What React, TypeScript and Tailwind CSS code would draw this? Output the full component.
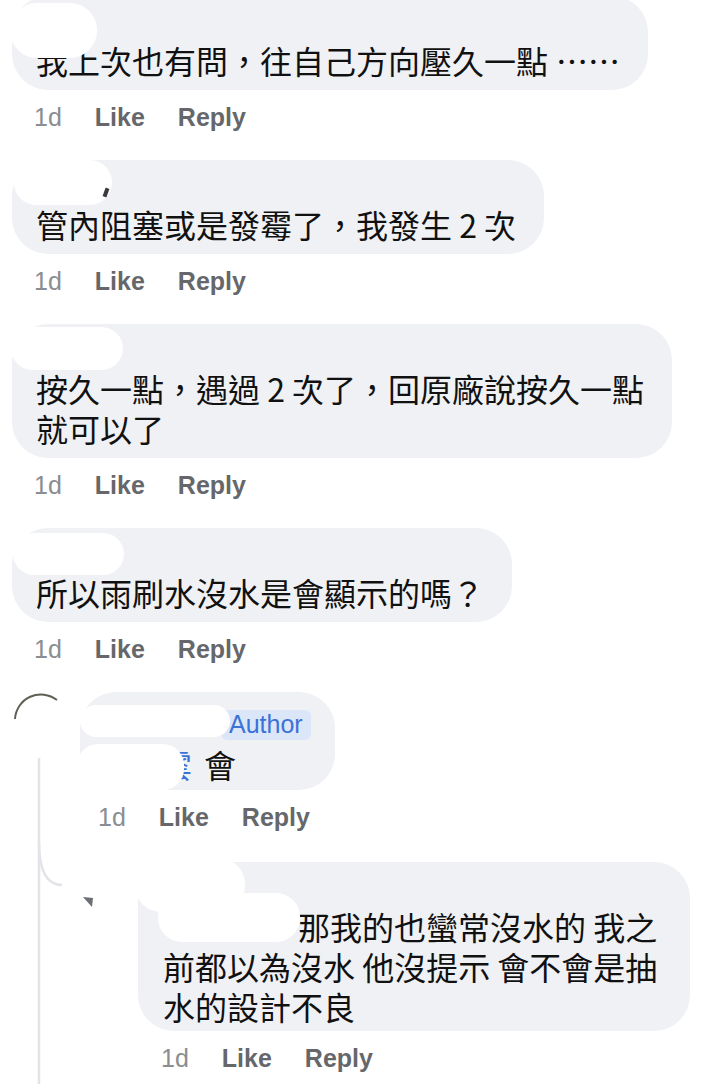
import React from 'react';

type Comment = {
  lines: React.ReactNode[];
  blob: string;
  wrap: string;
};

const comments: Comment[] = [
  {
    lines: [
      <>
        我上次也有問，往自己方向壓久一點<span className="ml-[8px]">……</span>
      </>,
    ],
    blob: 'left-[-2px] top-[7px] w-[87px] h-[55px] rounded-[27px]',
    wrap: '-mt-[4px]',
  },
  {
    lines: ['管內阻塞或是發霉了，我發生 2 次'],
    blob: 'left-[2px] top-0 w-[98px] h-[45px] rounded-[22px]',
    wrap: '',
  },
  {
    lines: ['按久一點，遇過 2 次了，回原廠說按久一點', '就可以了'],
    blob: 'left-[-1px] top-[3px] w-[112px] h-[43px] rounded-[22px]',
    wrap: '',
  },
  {
    lines: ['所以雨刷水沒水是會顯示的嗎？'],
    blob: 'left-[1px] top-[5px] w-[111px] h-[42px] rounded-[21px]',
    wrap: '',
  },
];

const ActionRow = ({ className }: { className: string }) => (
  <div
    className={`flex items-center gap-[33px] pt-[14px] font-['Liberation_Sans',Arial,sans-serif] text-[25px] leading-[26px] ${className}`}
  >
    <span className="text-[#8a8d91]">1d</span>
    <span className="font-bold text-[#65676b]">Like</span>
    <span className="font-bold text-[#65676b]">Reply</span>
  </div>
);

const Thread = () => (
  <svg
    className="pointer-events-none absolute left-0 top-0"
    width="720"
    height="400"
    viewBox="0 0 720 400"
    fill="none"
  >
    {/* avatar edge left visible */}
    <path d="M15 27 A26 26 0 0 1 57 8" stroke="#5d6052" strokeWidth="2" />
    {/* thread lines */}
    <path d="M39 66 V400" stroke="#e2e4e8" strokeWidth="2.5" />
    <path d="M39 150 Q39 193 62 193" stroke="#e2e4e8" strokeWidth="2.5" />
    <polygon points="83,205 93,206 92,215" fill="#6b6e73" />
  </svg>
);

export default function App() {
  return (
    <div className="h-[1084px] w-[720px] overflow-hidden bg-white font-['Noto_Sans_CJK_TC','Noto_Sans_CJK_SC',sans-serif] text-[#111111]">
      {comments.map((c, i) => (
        <div key={i} className={`pl-[12px] ${c.wrap}`}>
          <div className="relative w-fit rounded-[36px] bg-[#f0f1f5] pb-[10px] pl-[24px] pr-[28px] pt-[10px]">
            <div className="h-[34px]" />
            {c.lines.map((l, j) => (
              <div key={j} className="whitespace-nowrap text-[32px] leading-[40px]">
                {l}
              </div>
            ))}
            <div className={`absolute bg-white ${c.blob}`} />
            {i === 1 && (
              <div className="absolute left-[92px] top-[28px] h-[9px] w-[4px] rotate-[20deg] bg-[#3a3a3a]" />
            )}
          </div>
          <ActionRow className="pb-[30px] pl-[22px]" />
        </div>
      ))}

      {/* replies */}
      <div className="relative">
        <Thread />

        <div className="pl-[80px]">
          <div className="relative w-fit rounded-[36px] bg-[#f0f1f5] pb-[6px] pl-[20px] pr-[24px] pt-[14px]">
            <div className="flex h-[38px] items-center">
              <div className="w-[114px]" />
              <span className="ml-[7px] flex h-[30px] items-center rounded-[6px] bg-[#dbe6f8] px-[8px] font-['Liberation_Sans',Arial,sans-serif] text-[25px] text-[#3b72d6]">
                Author
              </span>
            </div>
            <div className="flex items-center whitespace-nowrap text-[32px] leading-[40px]">
              <span className="inline-block w-[92px] text-right text-[#3b72d6]">雲</span>
              <span className="ml-[12px]">會</span>
            </div>
            <div className="absolute left-0 top-[13px] h-[32px] w-[150px] rounded-full bg-white" />
            <div className="absolute left-[-3px] top-[52px] h-[46px] w-[107px] rounded-[21px] bg-white" />
          </div>
          <ActionRow className="pb-[32px] pl-[18px]" />
        </div>

        <div className="pl-[138px]">
          <div className="relative w-fit rounded-[36px] bg-[#f0f1f5] pb-[5px] pl-[25px] pr-[33px] pt-[10px]">
            <div className="h-[34px]" />
            <div className="whitespace-nowrap text-[32px] leading-[40px]">
              <span className="inline-block w-[135px]" />
              那我的也蠻常沒水的 我之
            </div>
            <div className="whitespace-nowrap text-[32px] leading-[40px]">前都以為沒水 他沒提示 會不會是抽</div>
            <div className="whitespace-nowrap text-[32px] leading-[40px]">水的設計不良</div>
            <div className="absolute left-[-3px] top-[-4px] h-[54px] w-[110px] rounded-[26px] bg-white" />
            <div className="absolute left-[20px] top-[31px] h-[49px] w-[142px] rounded-[24px] bg-white" />
          </div>
          <ActionRow className="pl-[23px]" />
        </div>
      </div>
    </div>
  );
}
